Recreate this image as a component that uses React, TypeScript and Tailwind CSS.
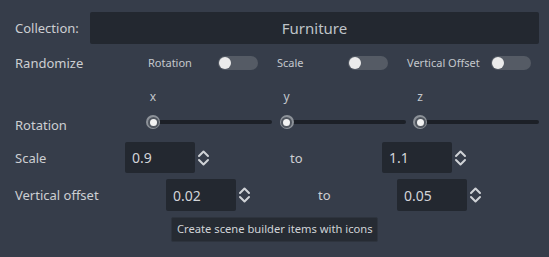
import React from "react";

function Toggle() {
  return (
    <div className="relative w-[40px] h-[14px] rounded-full bg-[#555b65]">
      <div className="absolute left-[1px] top-[1px] w-[12px] h-[12px] rounded-full bg-[#ebebeb]" />
    </div>
  );
}

function Slider() {
  return (
    <div className="relative w-[126px] h-[16px]">
      <div className="absolute left-[2px] right-0 top-[6px] h-[4px] rounded-full bg-[#1c2027]" />
      <div className="absolute left-0 top-[1px] w-[14px] h-[14px] rounded-full bg-[#8d9299] flex items-center justify-center">
        <div className="w-[11px] h-[11px] rounded-full bg-[#50565f] flex items-center justify-center">
          <div className="w-[7px] h-[7px] rounded-full bg-[#f2f2f2]" />
        </div>
      </div>
    </div>
  );
}

function Spinner() {
  return (
    <svg width="13" height="18" viewBox="0 0 13 18" className="ml-[2px]">
      <path d="M2 7 L6.5 2.5 L11 7" fill="none" stroke="#cfd2d6" strokeWidth="2" strokeLinecap="round" strokeLinejoin="round" />
      <path d="M2 11 L6.5 15.5 L11 11" fill="none" stroke="#cfd2d6" strokeWidth="2" strokeLinecap="round" strokeLinejoin="round" />
    </svg>
  );
}

function Spin({ value, h }: { value: string; h: string }) {
  return (
    <div className="flex items-center">
      <div className={`w-[70px] ${h} bg-[#232830] rounded-[2px] flex items-center pl-[7px] text-[14px] text-[#d2d4d8]`}>
        {value}
      </div>
      <Spinner />
    </div>
  );
}

export default function App() {
  return (
    <div className="w-[549px] h-[257px] bg-[#363d4a] relative overflow-hidden font-['Noto_Sans',sans-serif] text-[#cdcfd2]">
      {/* Collection */}
      <div className="flex items-center pl-[15px] pr-[10px] pt-[12px]">
        <div className="w-[75px] text-[13px] leading-[16px]">Collection:</div>
        <div className="flex-1 h-[32px] bg-[#232830] rounded-[2px] flex items-center justify-center text-[15px] text-[#bfc3c8]">
          Furniture
        </div>
      </div>

      {/* Randomize */}
      <div className="flex items-center pl-[15px] mt-[12px] h-[14px]">
        <div className="w-[133px] text-[13px] leading-[16px]">Randomize</div>
        <div className="flex items-center">
          <div className="w-[70px] text-[11px] leading-[14px] text-[#c4c8cd]">Rotation</div>
          <Toggle />
        </div>
        <div className="flex items-center ml-[19px]">
          <div className="w-[71px] text-[11px] leading-[14px] text-[#c4c8cd]">Scale</div>
          <Toggle />
        </div>
        <div className="flex items-center ml-[19px]">
          <div className="w-[84px] text-[11px] leading-[14px] text-[#c4c8cd]">Vertical Offset</div>
          <Toggle />
        </div>
      </div>

      {/* xyz labels */}
      <div className="flex pl-[146px] mt-[20px] h-[14px] gap-[7.5px]">
        {["x", "y", "z"].map((l) => (
          <div key={l} className="w-[126px]">
            <div className="w-[14px] text-center text-[12px] leading-[14px] text-[#c4c8cd]">{l}</div>
          </div>
        ))}
      </div>

      {/* Rotation sliders */}
      <div className="flex items-start pl-[15px] mt-[10px]">
        <div className="w-[131px] text-[13px] leading-[16px] mt-[3px]">Rotation</div>
        <div className="flex gap-[7.5px]">
          <Slider />
          <Slider />
          <Slider />
        </div>
      </div>

      {/* Scale */}
      <div className="flex items-center pl-[15px] mt-[9px]">
        <div className="w-[110px] text-[13px] leading-[16px]">Scale</div>
        <Spin value="0.9" h="h-[31px]" />
        <div className="w-[172px] pl-[80px] text-[13px] leading-[16px]">to</div>
        <Spin value="1.1" h="h-[31px]" />
      </div>

      {/* Vertical offset */}
      <div className="flex items-center pl-[15px] mt-[6px]">
        <div className="w-[151px] text-[13px] leading-[16px]">Vertical offset</div>
        <Spin value="0.02" h="h-[32px]" />
        <div className="w-[146px] pl-[67px] text-[13px] leading-[16px]">to</div>
        <Spin value="0.05" h="h-[32px]" />
      </div>

      {/* Tooltip */}
      <div className="absolute left-[171px] top-[217px] w-[207px] h-[25px] bg-[#262b33] border border-[#2e343e] rounded-[2px] flex items-center pl-[5px] whitespace-nowrap text-[11.2px] text-[#d0d3d7]">
        Create scene builder items with icons
      </div>
    </div>
  );
}
